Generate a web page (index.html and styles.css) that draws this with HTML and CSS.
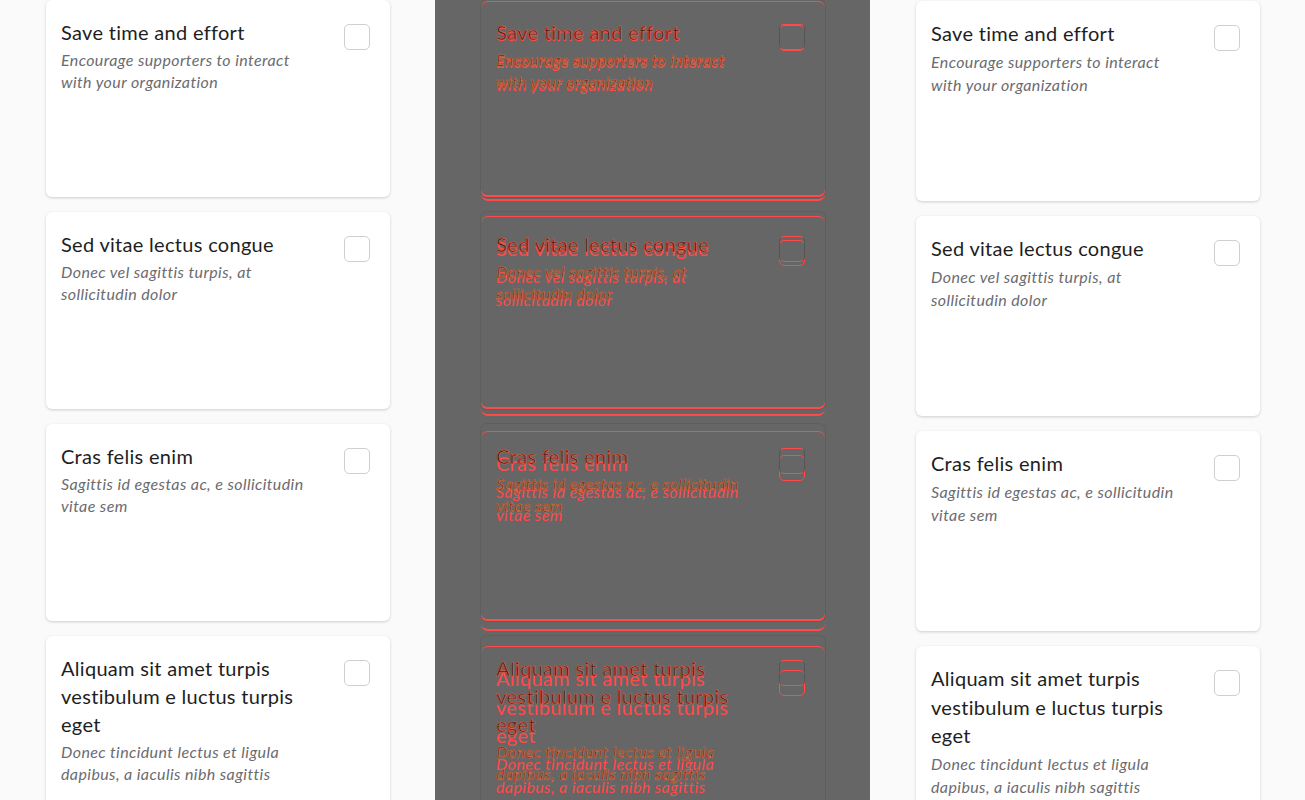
FILE: index.html
```html
<!DOCTYPE html>
<html lang="en">
<head>
<meta charset="utf-8">
<title>Cards diff</title>
<link rel="stylesheet" href="styles.css">
</head>
<body>
<main class="page">
  <section class="col col-light">
    <div class="cards">
      <div class="card"><div class="text"><div class="title">Save time and effort</div><div class="sub">Encourage supporters to interact with your organization</div></div><span class="box"></span></div>
      <div class="card"><div class="text"><div class="title">Sed vitae lectus congue</div><div class="sub">Donec vel sagittis turpis, at sollicitudin dolor</div></div><span class="box"></span></div>
      <div class="card"><div class="text"><div class="title">Cras felis enim</div><div class="sub">Sagittis id egestas ac, e sollicitudin vitae sem</div></div><span class="box"></span></div>
      <div class="card"><div class="text"><div class="title">Aliquam sit amet turpis vestibulum e luctus turpis eget</div><div class="sub">Donec tincidunt lectus et ligula dapibus, a iaculis nibh sagittis</div></div><span class="box"></span></div>
    </div>
  </section>

  <section class="col col-diff">
    <div class="stack">
      <div class="cards layer layer-b actual">
        <div class="card"><div class="text"><div class="title">Save time and effort</div><div class="sub">Encourage supporters to interact with your organization</div></div><span class="box"></span></div>
        <div class="card"><div class="text"><div class="title">Sed vitae lectus congue</div><div class="sub">Donec vel sagittis turpis, at sollicitudin dolor</div></div><span class="box"></span></div>
        <div class="card"><div class="text"><div class="title">Cras felis enim</div><div class="sub">Sagittis id egestas ac, e sollicitudin vitae sem</div></div><span class="box"></span></div>
        <div class="card"><div class="text"><div class="title">Aliquam sit amet turpis vestibulum e luctus turpis eget</div><div class="sub">Donec tincidunt lectus et ligula dapibus, a iaculis nibh sagittis</div></div><span class="box"></span></div>
      </div>
      <div class="cards layer layer-a">
        <div class="card"><div class="text"><div class="title">Save time and effort</div><div class="sub">Encourage supporters to interact with your organization</div></div><span class="box"></span></div>
        <div class="card"><div class="text"><div class="title">Sed vitae lectus congue</div><div class="sub">Donec vel sagittis turpis, at sollicitudin dolor</div></div><span class="box"></span></div>
        <div class="card"><div class="text"><div class="title">Cras felis enim</div><div class="sub">Sagittis id egestas ac, e sollicitudin vitae sem</div></div><span class="box"></span></div>
        <div class="card"><div class="text"><div class="title">Aliquam sit amet turpis vestibulum e luctus turpis eget</div><div class="sub">Donec tincidunt lectus et ligula dapibus, a iaculis nibh sagittis</div></div><span class="box"></span></div>
      </div>
    </div>
  </section>

  <section class="col col-light">
    <div class="cards actual">
      <div class="card"><div class="text"><div class="title">Save time and effort</div><div class="sub">Encourage supporters to interact with your organization</div></div><span class="box"></span></div>
      <div class="card"><div class="text"><div class="title">Sed vitae lectus congue</div><div class="sub">Donec vel sagittis turpis, at sollicitudin dolor</div></div><span class="box"></span></div>
      <div class="card"><div class="text"><div class="title">Cras felis enim</div><div class="sub">Sagittis id egestas ac, e sollicitudin vitae sem</div></div><span class="box"></span></div>
      <div class="card"><div class="text"><div class="title">Aliquam sit amet turpis vestibulum e luctus turpis eget</div><div class="sub">Donec tincidunt lectus et ligula dapibus, a iaculis nibh sagittis</div></div><span class="box"></span></div>
    </div>
  </section>
</main>
</body>
</html>
```
FILE: styles.css
```css
html, body {
  margin: 0;
  padding: 0;
}
body {
  font-family: Lato, "Noto Sans", sans-serif;
  background: #fafafa;
}
.page {
  display: grid;
  grid-template-columns: 435px 435px 435px;
  height: 800px;
  overflow: hidden;
}
.col {
  padding: 0 45px 0 46px;
  overflow: hidden;
}
.col-light {
  background: #fafafa;
}
.col-diff {
  background: #666666;
}
.cards {
  display: flex;
  flex-direction: column;
  gap: 15px;
}
.card {
  box-sizing: border-box;
  height: 197px;
  flex: none;
  display: flex;
  justify-content: space-between;
  align-items: flex-start;
  padding: 18px 20px 0 15px;
  background: #ffffff;
  border-radius: 6px;
  box-shadow: 0 1px 3px rgba(0, 0, 0, 0.18);
}
.text {
  width: 255px;
}
.title {
  font-size: 20px;
  line-height: 28px;
  letter-spacing: 0.3px;
  color: #1e1e1e;
}
.sub {
  margin-top: 3px;
  font-size: 16px;
  line-height: 22px;
  letter-spacing: 0.4px;
  font-style: italic;
  color: #6b6b70;
}
.box {
  flex: none;
  box-sizing: border-box;
  width: 26px;
  height: 26px;
  margin-top: 6px;
  border: 1px solid #cfcfcf;
  border-radius: 5px;
  background: #ffffff;
}

/* actual (right) version: slightly taller rhythm */
.actual {
  padding-top: 1px;
}
.actual .card {
  height: 200px;
}
.actual .title {
  line-height: 28.5px;
}
.actual .sub {
  margin-top: 2.5px;
  line-height: 23px;
}

/* diff overlay column */
.stack {
  display: grid;
}
.layer {
  grid-area: 1 / 1;
}
.layer .card {
  background: transparent;
  box-shadow: none;
}
.layer-a .card {
  box-shadow: 0 0 0 1px rgba(0, 0, 0, 0.07), inset 0 -2px 0 #ff4a4a;
}
.layer-b .card {
  border-top: 1px solid #ff4a4a;
  border-bottom: 2px solid #ff4a4a;
  border-radius: 7px;
  padding-top: 17px;
}
.layer-b .title,
.layer-b .sub {
  color: #ff4a4a;
}
.layer-a .title {
  color: #2a2222;
  -webkit-text-stroke: 0.6px #ee5a3c;
}
.layer-a .sub {
  color: #3a2a2a;
  -webkit-text-stroke: 0.6px #e0703a;
}
.layer .box {
  background: transparent;
  border-color: #ff4a4a #555555;
}
.layer-b .box {
  border-color: #ff4a4a;
}
```
